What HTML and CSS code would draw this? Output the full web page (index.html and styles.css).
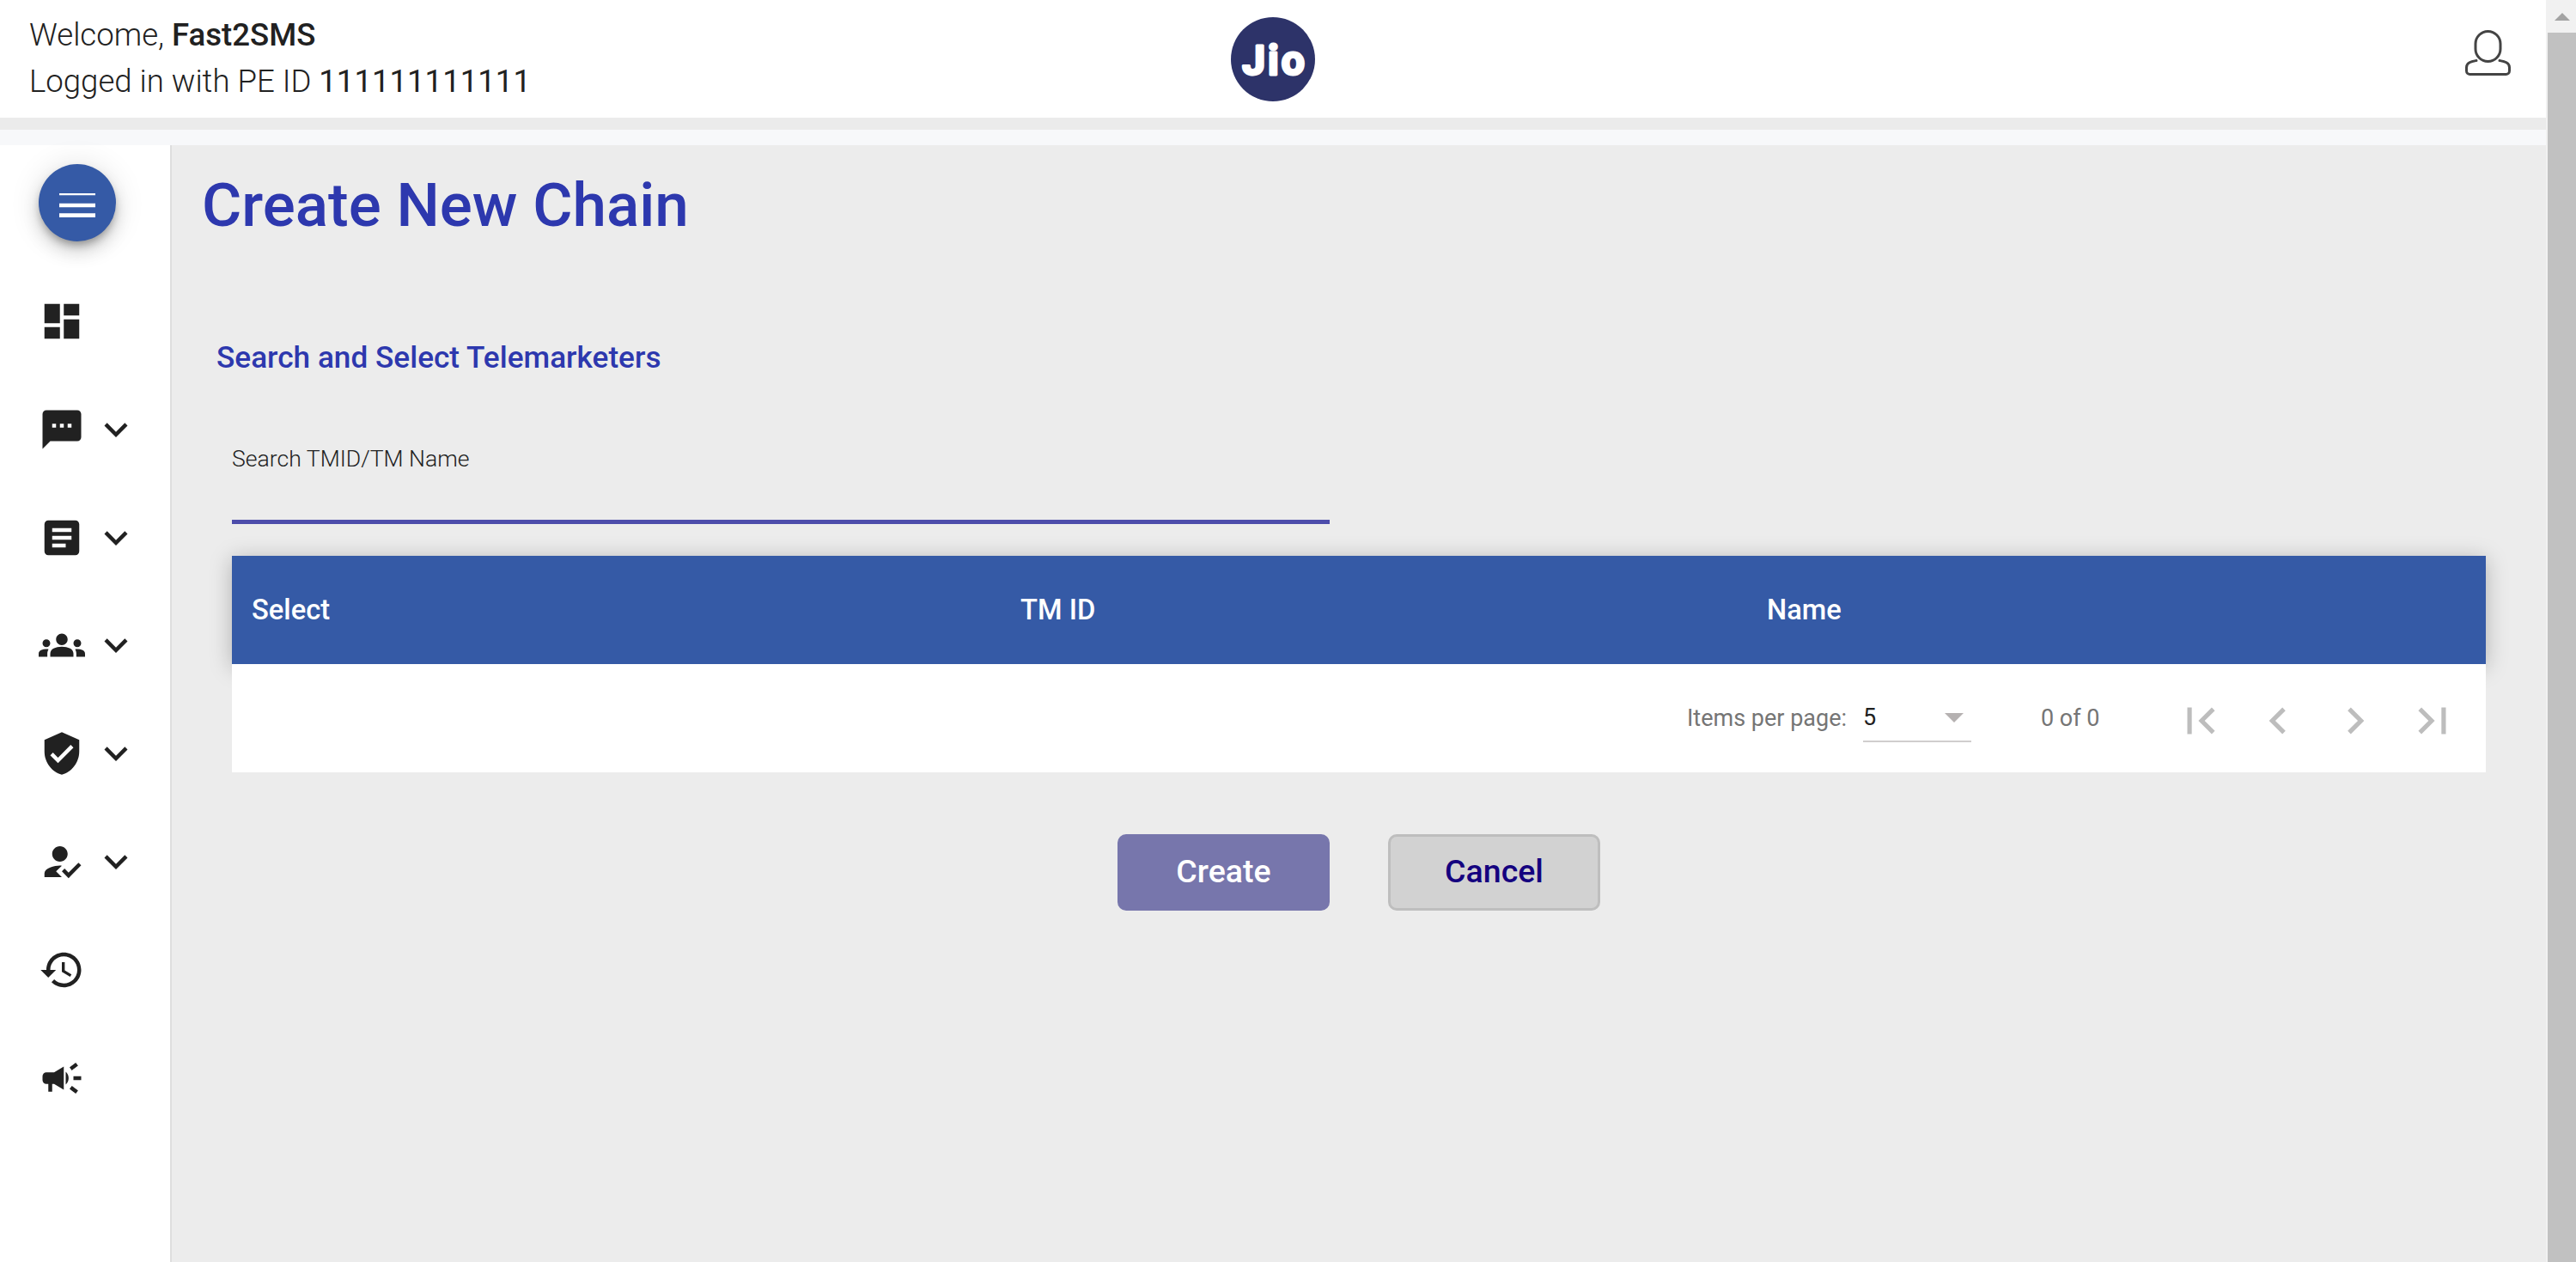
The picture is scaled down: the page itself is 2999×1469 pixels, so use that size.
FILE: index.html
```html
<!DOCTYPE html>
<html lang="en">
<head>
<meta charset="utf-8">
<title>Create New Chain</title>
<link rel="stylesheet" href="styles.css">
</head>
<body>
<div class="app">
  <div class="page">
    <header class="topbar">
      <div class="welcome">
        <div class="line">Welcome, <span class="strong">Fast2SMS</span></div>
        <div class="line">Logged in with PE ID <span class="num">111111111111</span></div>
      </div>
      <svg class="logo" viewBox="0 0 98 98" role="img" aria-label="Jio">
        <circle cx="49" cy="49" r="49" fill="#2d3369"/>
        <text class="logo-text" x="51" y="67" text-anchor="middle">Jio</text>
      </svg>
      <div class="user-wrap">
        <svg class="user" viewBox="0 0 53 53" fill="none" stroke="#444" stroke-width="3" stroke-linecap="round">
          <rect x="12" y="1.5" width="29" height="35" rx="14.5"/>
          <path d="M13 35.500C8 36.500 1.500 37.500 1.500 43.500v4c0 2.500 2 4 4 4h42c2 0 4-1.500 4-4v-4c0-6-6.500-7-11.500-8"/>
        </svg>
      </div>
    </header>
    <div class="band"></div>
    <div class="strip"></div>
    <div class="body">
      <nav class="sidebar">
        <button class="fab" type="button">
          <svg class="fab-icon" viewBox="0 0 24 24"><path d="M3 18h18v-2H3v2zm0-5h18v-2H3v2zm0-8v2h18V6H3z"/></svg>
        </button>
        <div class="nav-list">
          <div class="nav-item">
            <svg class="nav-icon" viewBox="0 0 24 24"><path d="M3 13h8V3H3v10zm0 8h8v-6H3v6zm10 0h8V11h-8v10zm0-18v6h8V3h-8z"/></svg>
          </div>
          <div class="nav-item">
            <svg class="nav-icon" viewBox="0 0 24 24"><path d="M20 2H4c-1.100 0-1.990.9-1.990 2L2 22l4-4h14c1.100 0 2-.9 2-2V4c0-1.100-.9-2-2-2zM9 11H7V9h2v2zm4 0h-2V9h2v2zm4 0h-2V9h2v2z"/></svg>
            <svg class="nav-icon" viewBox="0 0 24 24"><path d="M16.590 8.590L12 13.170 7.410 8.590 6 10l6 6 6-6z"/></svg>
          </div>
          <div class="nav-item">
            <svg class="nav-icon" viewBox="0 0 24 24"><path d="M19 3H5c-1.100 0-2 .9-2 2v14c0 1.100.9 2 2 2h14c1.100 0 2-.9 2-2V5c0-1.100-.9-2-2-2zm-5 14H7v-2h7v2zm3-4H7v-2h10v2zm0-4H7V7h10v2z"/></svg>
            <svg class="nav-icon" viewBox="0 0 24 24"><path d="M16.590 8.590L12 13.170 7.410 8.590 6 10l6 6 6-6z"/></svg>
          </div>
          <div class="nav-item">
            <svg class="nav-icon" viewBox="0 0 24 24"><path d="M12 12.750c1.630 0 3.070.39 4.240.9 1.080.48 1.760 1.560 1.760 2.730V18H6v-1.610c0-1.180.68-2.260 1.760-2.730 1.170-.52 2.610-.91 4.240-.91zM4 13c1.100 0 2-.9 2-2s-.9-2-2-2-2 .9-2 2 .9 2 2 2zm1.130 1.100c-.37-.06-.74-.1-1.130-.1-.99 0-1.930.21-2.780.58C.48 14.900 0 15.620 0 16.430V18h4.500v-1.610c0-.83.23-1.610.63-2.290zM20 13c1.100 0 2-.9 2-2s-.9-2-2-2-2 .9-2 2 .9 2 2 2zm4 3.430c0-.81-.48-1.530-1.220-1.850-.85-.37-1.790-.58-2.780-.58-.39 0-.76.04-1.130.1.4.68.63 1.460.63 2.290V18H24v-1.570zM12 6c1.660 0 3 1.340 3 3s-1.340 3-3 3-3-1.340-3-3 1.340-3 3-3z"/></svg>
            <svg class="nav-icon" viewBox="0 0 24 24"><path d="M16.590 8.590L12 13.170 7.410 8.590 6 10l6 6 6-6z"/></svg>
          </div>
          <div class="nav-item">
            <svg class="nav-icon" viewBox="0 0 24 24"><path d="M12 1L3 5v6c0 5.550 3.840 10.740 9 12 5.160-1.260 9-6.450 9-12V5l-9-4zm-2 16l-4-4 1.410-1.410L10 14.170l6.590-6.590L18 9l-8 8z"/></svg>
            <svg class="nav-icon" viewBox="0 0 24 24"><path d="M16.590 8.590L12 13.170 7.410 8.590 6 10l6 6 6-6z"/></svg>
          </div>
          <div class="nav-item">
            <svg class="nav-icon" viewBox="0 0 24 24"><path d="M9 17l3-2.940c-.39-.04-.68-.06-1-.06-2.670 0-8 1.340-8 4v2h9l-3-3zm2-5c2.210 0 4-1.790 4-4s-1.790-4-4-4-4 1.790-4 4 1.790 4 4 4z"/><path d="M15.470 20.500L12 17l1.400-1.410 2.070 2.080 5.130-5.170 1.400 1.410z"/></svg>
            <svg class="nav-icon" viewBox="0 0 24 24"><path d="M16.590 8.590L12 13.170 7.410 8.590 6 10l6 6 6-6z"/></svg>
          </div>
          <div class="nav-item">
            <svg class="nav-icon" viewBox="0 0 24 24"><path d="M13 3c-4.970 0-9 4.030-9 9H1l3.890 3.890.07.14L9 12H6c0-3.870 3.130-7 7-7s7 3.130 7 7-3.130 7-7 7c-1.930 0-3.680-.79-4.940-2.060l-1.420 1.420C8.270 19.990 10.510 21 13 21c4.970 0 9-4.030 9-9s-4.030-9-9-9zm-1 5v5l4.280 2.540.72-1.210-3.500-2.080V8H12z"/></svg>
          </div>
          <div class="nav-item">
            <svg class="nav-icon" viewBox="0 0 24 24"><path d="M18 11v2h4v-2h-4zm-2 6.610c.96.71 2.210 1.650 3.200 2.390.4-.53.8-1.070 1.200-1.600-.99-.74-2.240-1.680-3.200-2.400-.4.54-.8 1.080-1.200 1.610zM20.400 5.600c-.4-.53-.8-1.070-1.200-1.600-.99.74-2.240 1.680-3.200 2.400.4.53.8 1.070 1.200 1.600.96-.72 2.210-1.650 3.200-2.400zM4 9c-1.100 0-2 .9-2 2v2c0 1.100.9 2 2 2h1v4h2v-4h1l5 3V6L8 9H4zm11.500 3c0-1.330-.58-2.530-1.500-3.350v6.690c.92-.81 1.500-2.010 1.500-3.340z"/></svg>
          </div>
        </div>
      </nav>
      <main class="content">
        <h1 class="title">Create New Chain</h1>
        <h2 class="section">Search and Select Telemarketers</h2>
        <div class="panel">
          <div class="field">
            <div class="field-label">Search TMID/TM Name</div>
          </div>
          <div class="table-head">
            <div class="col col-select">Select</div>
            <div class="col col-id">TM ID</div>
            <div class="col col-name">Name</div>
          </div>
          <div class="paginator">
            <span class="page-label">Items per page:</span>
            <div class="page-select"><span class="page-size">5</span><span class="caret"></span></div>
            <span class="page-range">0 of 0</span>
            <div class="page-nav">
              <svg class="page-btn" viewBox="0 0 24 24"><path d="M18.410 16.590L13.820 12l4.590-4.590L17 6l-6 6 6 6zM6 6h2v12H6z"/></svg>
              <svg class="page-btn" viewBox="0 0 24 24"><path d="M15.410 7.410L14 6l-6 6 6 6 1.410-1.410L10.830 12z"/></svg>
              <svg class="page-btn" viewBox="0 0 24 24"><path d="M10 6L8.590 7.410 13.170 12l-4.580 4.590L10 18l6-6z"/></svg>
              <svg class="page-btn" viewBox="0 0 24 24"><path d="M5.590 7.410L10.180 12l-4.590 4.590L7 18l6-6-6-6zM16 6h2v12h-2z"/></svg>
            </div>
          </div>
        </div>
        <div class="actions">
          <button class="btn btn-primary" type="button">Create</button>
          <button class="btn btn-secondary" type="button">Cancel</button>
        </div>
      </main>
    </div>
  </div>
  <div class="scrollbar">
    <div class="scroll-up"><span class="scroll-arrow"></span></div>
    <div class="scroll-thumb"></div>
  </div>
</div>
</body>
</html>
```
FILE: styles.css
```css
* { box-sizing: border-box; }
html, body { margin: 0; height: 100%; overflow: hidden; }
body { font-family: Roboto, "Liberation Sans", sans-serif; color: #212121; background: #fff; }
.app { display: flex; height: 1469px; }
.page { flex: 1; display: flex; flex-direction: column; min-width: 0; }

.topbar { height: 137px; display: grid; grid-template-columns: 1fr auto 1fr; align-items: center; background: #fff; padding: 0 34px; }
.welcome { font-size: 36.6px; font-weight: 300; line-height: 54px; margin-top: -1px; white-space: nowrap; }
.strong { font-weight: 500; }
.num { font-weight: 400; }
.logo { width: 98px; height: 98px; }
.logo-text { font-family: Roboto, sans-serif; font-weight: 700; font-size: 48px; letter-spacing: 3px; fill: #fff; stroke: #fff; stroke-width: 3px; stroke-linejoin: round; }
.user-wrap { display: flex; justify-content: flex-end; padding-right: 7px; margin-top: -14px; }
.user { width: 53px; height: 53px; }

.band { height: 14px; background: #ebebeb; }
.strip { height: 18px; background: #f7f8fa; }

.body { flex: 1; display: flex; min-height: 0; }
.sidebar { width: 200px; background: #fff; border-right: 2px solid #dedede; padding-top: 22px; display: flex; flex-direction: column; }
.fab { width: 90px; height: 90px; margin-left: 45px; border: 0; padding: 6px 0 0; border-radius: 50%; background: #355aa6; display: flex; align-items: center; justify-content: center; box-shadow: 0 6px 10px -2px rgba(0,0,0,.3), 0 12px 20px 0 rgba(0,0,0,.14), 0 2px 36px 0 rgba(0,0,0,.12); }
.fab-icon { width: 56px; height: 56px; fill: #fff; }
.nav-list { margin-top: 30px; }
.nav-item { height: 125.85px; display: flex; align-items: center; padding-left: 45px; gap: 9px; }
.nav-icon { width: 54px; height: 54px; fill: #212121; flex: none; }

.content { flex: 1; background: #ececec; min-width: 0; }
.title { margin: 31px 0 0; padding-left: 35px; font-size: 71px; font-weight: 500; line-height: 78px; color: #2d38ae; }
.section { margin: 118px 0 0; padding-left: 52px; font-size: 35.2px; font-weight: 500; line-height: 40px; color: #2d38ae; }
.panel { margin: 0 70px; }
.field { width: 1278px; height: 174px; padding-top: 81px; border-bottom: 5px solid #4d4dab; }
.field-label { font-size: 26.6px; font-weight: 300; line-height: 34px; color: #212121; }

.table-head { margin-top: 37px; height: 126px; background: #355aa6; color: #fff; display: grid; grid-template-columns: 918px 869px 1fr; align-items: center; font-size: 32.7px; font-weight: 500; box-shadow: 0 4px 24px rgba(0,0,0,.25); }
.col-select { padding-left: 23px; }
.paginator { position: relative; height: 126px; background: #fff; display: flex; align-items: center; font-size: 27px; color: #757575; padding-left: 1694px; }
.page-label { width: 205px; }
.page-select { width: 126px; height: 56px; border-bottom: 2px solid #d0cece; display: flex; align-items: center; justify-content: space-between; padding-right: 9px; }
.page-size { color: #212121; }
.caret { width: 0; height: 0; border-left: 11px solid transparent; border-right: 11px solid transparent; border-top: 11px solid #b5b1b1; }
.page-range { margin-left: 81px; width: 136px; }
.page-nav { display: flex; gap: 28px; margin: 5px 0 0 19px; }
.page-btn { width: 62px; height: 62px; fill: #bdbdbd; }

.actions { display: flex; justify-content: center; gap: 68px; margin-top: 72px; }
.btn { width: 247px; height: 89px; padding: 0 0 3px; border-radius: 10px; font-family: inherit; font-size: 37.5px; font-weight: 500; }
.btn-primary { background: #7776ac; color: #fff; border: 0; }
.btn-secondary { background: #d2d2d2; color: #14007f; border: 3px solid #bebebe; }

.scrollbar { width: 35px; background: #f1f1f1; display: flex; flex-direction: column; align-items: flex-end; }
.scroll-up { height: 38px; width: 33px; display: flex; align-items: center; justify-content: center; }
.scroll-arrow { width: 0; height: 0; border-left: 9px solid transparent; border-right: 9px solid transparent; border-bottom: 9px solid #a3a3a3; }
.scroll-thumb { flex: 1; width: 33px; background: #c1c1c1; }
```
